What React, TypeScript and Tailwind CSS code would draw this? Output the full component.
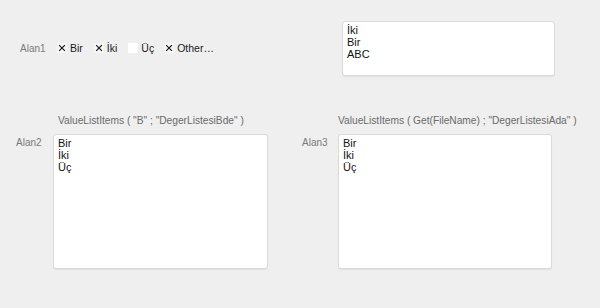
import React from "react";

function XMark() {
  return (
    <svg width="10" height="10" viewBox="0 0 10 10" className="block">
      <path d="M2.6 2.6 L7.4 7.4 M7.4 2.6 L2.6 7.4" stroke="#1a1a1a" strokeWidth="1.2" strokeLinecap="square" />
    </svg>
  );
}

function Check({ checked, label, className }: { checked: boolean; label: string; className: string }) {
  return (
    <div className={"flex items-center gap-[3px] " + className}>
      <div className={"w-[10px] h-[10px] " + (checked ? "bg-[#f6f6f6]" : "bg-white")}>
        {checked ? <XMark /> : null}
      </div>
      <span className="text-[#1a1a1a] text-[10.5px] leading-[12px]">{label}</span>
    </div>
  );
}

function ListBox({ items, className }: { items: string[]; className: string }) {
  return (
    <div
      className={
        "bg-white border border-[#dadada] rounded-[3px] shadow-[0_1px_1px_rgba(0,0,0,0.06)] px-[4px] pt-[2px] text-[11px] leading-[12px] text-[#111] " +
        className
      }
    >
      {items.map((t) => (
        <div key={t}>{t}</div>
      ))}
    </div>
  );
}

export default function App() {
  return (
    <div className="w-[600px] h-[308px] bg-[#efefef] overflow-hidden font-['Liberation_Sans',Arial,sans-serif]">
      <div className="flex items-start pt-[21px]">
        <div className="w-[342px] pt-[19px] flex items-center">
          <span className="pl-[20px] w-[57px] text-[10px] leading-[12px] text-[#7a7a7a] pt-[3px]">Alan1</span>
          <Check checked label="Bir" className="" />
          <Check checked label="İki" className="ml-[11px]" />
          <Check checked={false} label="Üç" className="ml-[11px]" />
          <Check checked label="Other…" className="ml-[10px]" />
        </div>
        <ListBox items={["İki", "Bir", "ABC"]} className="w-[213px] h-[55px]" />
      </div>
      <div className="flex mt-[39px] text-[10.2px] leading-[12px] text-[#6a6a6a]">
        <div className="w-[338px] pl-[58px]">ValueListItems ( "B" ; "DegerListesiBde" )</div>
        <div>ValueListItems ( Get(FileName) ; "DegerListesiAda" )</div>
      </div>
      <div className="flex mt-[7px]">
        <div className="w-[53px] pl-[16px] pt-[3px] text-[10px] leading-[12px] text-[#7a7a7a]">Alan2</div>
        <ListBox items={["Bir", "İki", "Üç"]} className="w-[215px] h-[135px]" />
        <div className="w-[70px] pl-[34px] pt-[3px] text-[10px] leading-[12px] text-[#7a7a7a]">Alan3</div>
        <ListBox items={["Bir", "İki", "Üç"]} className="w-[214px] h-[135px]" />
      </div>
    </div>
  );
}
